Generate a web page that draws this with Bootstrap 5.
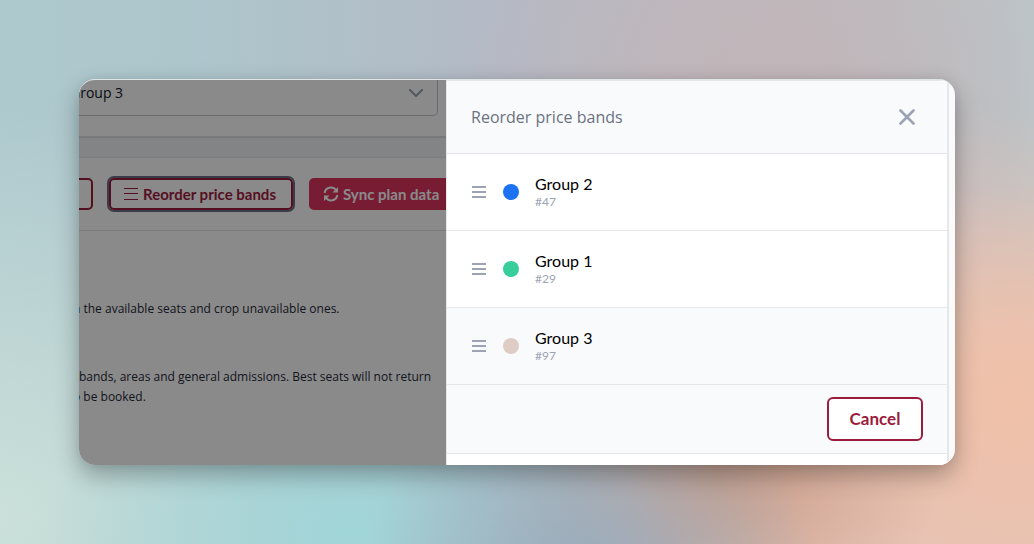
<!DOCTYPE html>
<html lang="en">
<head>
<meta charset="utf-8">
<meta name="viewport" content="width=device-width, initial-scale=1">
<title>Reorder price bands</title>
<link href="https://cdn.jsdelivr.net/npm/bootstrap@5.3.0/dist/css/bootstrap.min.css" rel="stylesheet">
<style>
  :root { --brand: #9b1c3d; --line: #e5e7eb; --soft: #f9fafc; --round: Lato, "Liberation Sans", sans-serif; }
  body {
    min-height: 100vh; padding: 79px; font-family: "Open Sans", "Noto Sans", sans-serif; color: #1f2937;
    background:
      radial-gradient(ellipse 22% 44% at 57% 108%, #98aabb 0%, #98aabb00 100%),
      radial-gradient(ellipse 30% 38% at 34% 98%, #a0d6d9 0%, #a0d6d900 100%),
      radial-gradient(ellipse 22% 30% at 69% 87%, #cb9c86 0%, #cb9c8600 100%),
      radial-gradient(ellipse 20% 40% at 98% 74%, #f0c1a9 0%, #f0c1a900 100%),
      radial-gradient(ellipse 46% 80% at 100% 100%, #e5c2b5 0%, #e5c2b5 45%, #e5c2b500 100%),
      radial-gradient(ellipse 30% 60% at 74% 24%, #c2b5b8 0%, #c2b5b800 100%),
      radial-gradient(ellipse 45% 75% at 0% 95%, #cbe0da 0%, #cbe0da00 100%),
      linear-gradient(to right, #aec9ce 0%, #adc6cc 18%, #b4b9c5 50%, #bdb8be 76%, #bcc5c8 100%);
  }
  .app-window { border-radius: 16px; overflow: hidden; border-top: 1px solid #dfe4e5; }
  .shadow-wrap { border-radius: 16px; box-shadow: 0 10px 24px rgba(0,0,0,.3), 0 0 10px rgba(0,0,0,.06); }
  .page-pane { flex: 1 1 0; min-width: 0; background: #fff; }
  .page-pane::after { content: ""; position: absolute; inset: 0; background: rgba(0,0,0,.46); }
  .filter-bar { padding: 0 8px 20px 0; border-bottom: 2px solid #dcdfe4; }
  .fake-select { width: calc(100% + 30px); height: 36px; margin-left: -30px; padding: 0 14px 10px 20px; border: 1px solid #c3c6cc; border-top: 0; border-radius: 0 0 5px 5px; background: #fff; font-size: 14px; color: #111827; }
  .band-gap { height: 20px; background: #f3f4f6; border-bottom: 1px solid var(--line); }
  .tools { gap: 16px; padding: 20px 0; margin-left: -60px; border-bottom: 1px solid #dcdfe4; }
  .tool-btn { height: 32px; padding: 0 15px 0 12px; flex: none; border: 2px solid var(--brand); border-radius: 5px; background: transparent; color: #a01c40; font: 700 15px/20px var(--round); white-space: nowrap; }
  .tool-stub { width: 74px; }
  .tool-btn.is-focused { box-shadow: 0 0 0 2px #6b7280; }
  .tool-btn.solid { background: #dd345f; border-color: #dd345f; color: #fff; }
  .notes { padding-top: 68px; margin-left: -6px; font-size: 12px; line-height: 20px; white-space: nowrap; }
  .notes p { margin: 0 0 48px; }
  .notes .follow { text-indent: 6px; margin-bottom: 58px; }
  .drawer { flex: 0 0 58.1%; padding-right: 6px; background: #fafafa; }
  .drawer-body { background: #fff; border-right: 2px solid var(--line); border-left: 1px solid var(--line); }
  .drawer-head { height: 74px; padding: 0 32px 0 24px; background: var(--soft); border-top: 1px solid var(--line); border-bottom: 1px solid var(--line); }
  .drawer-head h1 { font-size: 16px; line-height: 24px; font-weight: 400; color: #6b7280; }
  .band-row { height: 77px; padding: 0 24px; border-bottom: 1px solid var(--line); }
  .band-row.picked, .drawer-foot { background: var(--soft); }
  .plain-btn { border: 0; padding: 0; background: none; color: #9ca3b4; line-height: 0; }
  .dot { width: 16px; height: 16px; border-radius: 50%; }
  .blue { background: #1d72f3; } .green { background: #38ce9b; } .sand { background: #dfcdc5; }
  .band-name { font: 400 16px/20px var(--round); color: #000; }
  .band-id { font: 400 12px/16px var(--round); color: #9ca3b4; }
  .drawer-foot { padding: 12px 24px; border-bottom: 1px solid var(--line); }
  .cancel-btn { height: 44px; width: 96px; border: 2px solid var(--brand); border-radius: 6px; background: #fff; color: var(--brand); font: 700 17px/24px var(--round); }
</style>
</head>
<body>
<div class="shadow-wrap">
<div class="app-window d-flex">
  <main class="page-pane position-relative overflow-hidden">
    <div class="filter-bar">
      <button class="fake-select d-flex align-items-center justify-content-between">Group 3
        <svg width="14" height="8" viewBox="0 0 14 8" fill="none" stroke="#9ca3af" stroke-width="2" stroke-linecap="round"><path d="M1 1l6 6 6-6"/></svg>
      </button>
    </div>
    <div class="band-gap"></div>
    <div class="tools d-flex">
      <button class="tool-btn tool-stub" aria-label="More"></button>
      <button class="tool-btn is-focused d-flex align-items-center gap-1">
        <svg width="16" height="14" viewBox="0 0 16 14" stroke="currentColor" stroke-width="1"><path d="M1 1.5h14M1 6.5h14M1 12.5h14"/></svg>
        Reorder price bands</button>
      <button class="tool-btn solid d-flex align-items-center gap-1">
        <svg width="16" height="16" viewBox="0 0 16 16" fill="none" stroke="currentColor" stroke-width="2"><path d="M1.6 7A6.3 6.3 0 0 1 13 4.3M14.4 9A6.3 6.3 0 0 1 3 11.7"/><path d="M15 1v5.5H9.500zM1 15V9.500H6.500z" fill="currentColor" stroke="none"/></svg>
        Sync plan data</button>
    </div>
    <div class="notes">
      <p>n the available seats and crop unavailable ones.</p>
      <p class="follow">bands, areas and general admissions. Best seats will not return<br>o be booked.</p>
    </div>
  </main>
  <aside class="drawer">
    <div class="drawer-body h-100">
      <header class="drawer-head d-flex align-items-center justify-content-between">
        <h1 class="m-0">Reorder price bands</h1>
        <button class="plain-btn" aria-label="Close"><svg width="16" height="16" viewBox="0 0 16 16" stroke="currentColor" stroke-width="2.6" stroke-linecap="round"><path d="M1.500 1.500l13 13M14.500 1.500l-13 13"/></svg></button>
      </header>
      <ul class="list-unstyled m-0">
        <li class="band-row d-flex align-items-center gap-3">
          <button class="plain-btn" aria-label="Drag Group 2"><svg width="16" height="14" viewBox="0 0 16 14" stroke="currentColor" stroke-width="2"><path d="M1 2h14M1 7h14M1 12h14"/></svg></button>
          <span class="dot blue"></span><div><div class="band-name">Group 2</div><div class="band-id">#47</div></div>
        </li>
        <li class="band-row d-flex align-items-center gap-3">
          <button class="plain-btn" aria-label="Drag Group 1"><svg width="16" height="14" viewBox="0 0 16 14" stroke="currentColor" stroke-width="2"><path d="M1 2h14M1 7h14M1 12h14"/></svg></button>
          <span class="dot green"></span><div><div class="band-name">Group 1</div><div class="band-id">#29</div></div>
        </li>
        <li class="band-row picked d-flex align-items-center gap-3">
          <button class="plain-btn" aria-label="Drag Group 3"><svg width="16" height="14" viewBox="0 0 16 14" stroke="currentColor" stroke-width="2"><path d="M1 2h14M1 7h14M1 12h14"/></svg></button>
          <span class="dot sand"></span><div><div class="band-name">Group 3</div><div class="band-id">#97</div></div>
        </li>
      </ul>
      <footer class="drawer-foot d-flex justify-content-end"><button class="cancel-btn">Cancel</button></footer>
    </div>
  </aside>
</div>
</div>
<script src="https://cdn.jsdelivr.net/npm/bootstrap@5.3.0/dist/js/bootstrap.bundle.min.js"></script>
</body>
</html>
